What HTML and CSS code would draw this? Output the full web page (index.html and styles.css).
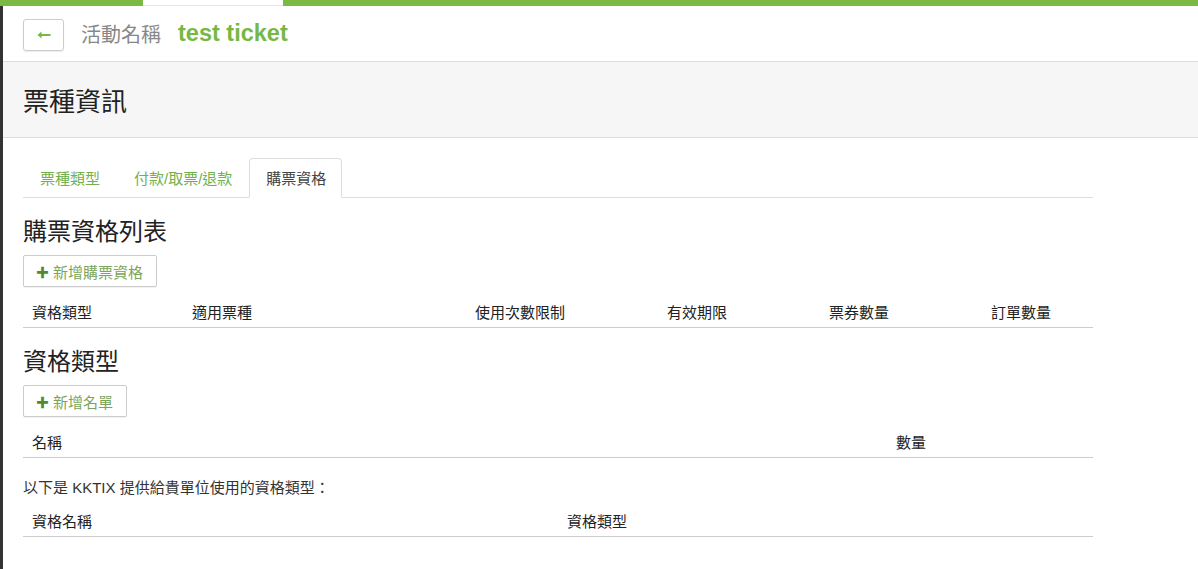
FILE: index.html
```html
<!DOCTYPE html>
<html lang="zh-Hant">

<head>
    <meta charset="UTF-8">
    <meta name="viewport" content="width=device-width, initial-scale=1.0">
    <title>票種資訊</title>
    <link rel="stylesheet" href="styles.css">
</head>

<body>
    <div class="top-bar">
        <div class="top-seg green first"></div>
        <div class="top-seg blank"></div>
        <div class="top-seg green rest"></div>
    </div>
    <div class="page-wrapper">
        <div class="event-header">
            <a class="back-btn" href="#">
                <svg width="14" height="8" viewBox="0 0 14 8">
                    <path d="M0.5 4 L4.5 0.5 L4.5 3 L13.5 3 L13.5 5 L4.5 5 L4.5 7.5 Z" fill="#76b843" />
                </svg>
            </a>
            <span class="event-label">活動名稱</span>
            <span class="event-name">test ticket</span>
        </div>
        <div class="title-band">
            <h1>票種資訊</h1>
        </div>
        <div class="content">
            <ul class="tabs">
                <li class="tab"><a href="#">票種類型</a></li>
                <li class="tab"><a href="#">付款/取票/退款</a></li>
                <li class="tab active"><a href="#">購票資格</a></li>
            </ul>

            <h3 class="section-title">購票資格列表</h3>
            <button class="add-btn"><span class="plus">✚</span>新增購票資格</button>
            <table class="list-table">
                <tr>
                    <th class="c1">資格類型</th>
                    <th class="c2">適用票種</th>
                    <th class="c3">使用次數限制</th>
                    <th class="c4">有效期限</th>
                    <th class="c5">票券數量</th>
                    <th>訂單數量</th>
                </tr>
            </table>

            <h3 class="section-title">資格類型</h3>
            <button class="add-btn"><span class="plus">✚</span>新增名單</button>
            <table class="list-table">
                <tr>
                    <th class="name-col">名稱</th>
                    <th>數量</th>
                </tr>
            </table>

            <p class="note">以下是 KKTIX 提供給貴單位使用的資格類型：</p>
            <table class="list-table">
                <tr>
                    <th class="half-col">資格名稱</th>
                    <th>資格類型</th>
                </tr>
            </table>
        </div>
    </div>
</body>

</html>
```

FILE: styles.css
```css
html,
body {
    margin: 0;
    font-family: "Liberation Sans", "Noto Sans CJK TC", sans-serif;
    font-size: 15px;
    color: #333;
    background: #fff;
    overflow: hidden;
}

.top-bar {
    display: flex;
    height: 6px;
}

.top-seg.green {
    background-color: #7ab943;
}

.top-seg.first {
    width: 143px;
}

.top-seg.blank {
    width: 140px;
    box-sizing: border-box;
    border-bottom: 1px solid #e6e6e6;
}

.top-seg.rest {
    flex: 1;
}

.page-wrapper {
    border-left: 3px solid #333;
    min-height: 563px;
}

.event-header {
    display: flex;
    align-items: center;
    height: 55px;
    padding-left: 20px;
    border-bottom: 1px solid #ddd;
}

.back-btn {
    display: flex;
    align-items: center;
    justify-content: center;
    width: 39px;
    height: 30px;
    border: 1px solid #ccc;
    border-radius: 3px;
    box-shadow: 0 1px 1px rgba(0, 0, 0, 0.08);
    margin-top: 3px;
}

.event-label {
    margin-left: 17px;
    font-size: 20px;
    color: #888;
}

.event-name {
    margin-left: 17px;
    font-size: 23.5px;
    font-weight: bold;
    color: #76b843;
    margin-top: -1px;
}

.title-band {
    background-color: #f6f6f6;
    border-bottom: 1px solid #ddd;
    height: 75px;
    display: flex;
    align-items: center;
    padding-left: 20px;
}

.title-band h1 {
    margin: 0;
    font-size: 26px;
    font-weight: normal;
    color: #222;
}

.content {
    width: 1070px;
    padding: 20px 0 0 20px;
}

.tabs {
    display: flex;
    list-style: none;
    margin: 0;
    padding: 0;
    border-bottom: 1px solid #ddd;
}

.tab {
    margin-right: 1px;
    margin-bottom: -1px;
}

.tab a {
    display: block;
    height: 40px;
    line-height: 39px;
    padding: 0 15px 0 16px;
    color: #72b04b;
    text-decoration: none;
    border: 1px solid transparent;
    border-radius: 4px 4px 0 0;
    box-sizing: border-box;
}

.tab.active a {
    color: #444;
    background: #fff;
    border-color: #ddd;
    border-bottom-color: #fff;
}

.section-title {
    margin: 21px 0 0;
    font-size: 24px;
    font-weight: normal;
    line-height: 26px;
    color: #222;
}

.add-btn {
    display: flex;
    align-items: center;
    margin-top: 10px;
    height: 32px;
    padding: 0 13px 0 12px;
    font-family: inherit;
    font-size: 15px;
    color: #7aa65a;
    background: #fff;
    border: 1px solid #ccc;
    border-radius: 2px;
    box-shadow: 0 1px 1px rgba(0, 0, 0, 0.06);
}

.plus {
    color: #4f8a2c;
    font-size: 13px;
    margin-right: 4px;
}

.list-table {
    width: 1070px;
    border-collapse: collapse;
    margin-top: 11px;
}

.list-table th {
    text-align: left;
    font-weight: normal;
    color: #222;
    line-height: 20px;
    padding: 5px 9px 4px;
    border-bottom: 1px solid #ccc;
}

.c1 {
    width: 142px;
}

.c2 {
    width: 265px;
}

.c3 {
    width: 174px;
}

.c4 {
    width: 144px;
}

.c5 {
    width: 144px;
}

.name-col {
    width: 846px;
}

.half-col {
    width: 517px;
}

.list-table + .section-title {
    margin-top: 21px;
}

.note {
    margin: 20px 0 0;
    line-height: 20px;
    font-size: 15px;
}

.note + .list-table {
    margin-top: 9px;
}
```
